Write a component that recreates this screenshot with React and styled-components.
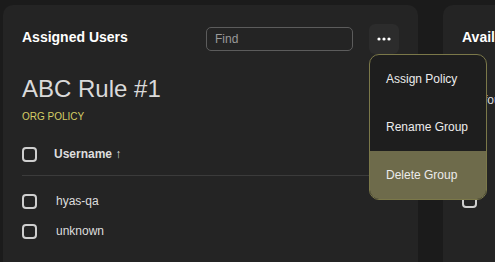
import React, { useState } from 'react';
import styled, { createGlobalStyle } from 'styled-components';

const GlobalStyle = createGlobalStyle`
  html, body {
    margin: 0;
    padding: 0;
    background: #1b1b1b;
    font-family: "Liberation Sans", Arial, sans-serif;
    overflow: hidden;
  }
`;

const Page = styled.div`
  display: flex;
  gap: 25px;
  padding: 5px 0 0 3px;
  height: 262px;
  box-sizing: border-box;
`;

const Panel = styled.section`
  position: relative;
  flex: ${p => (p.grow ? '1 0 auto' : '0 0 auto')};
  width: ${p => (p.width ? `${p.width}px` : 'auto')};
  height: 300px;
  background: #242424;
  border-radius: 10px;
  padding: 19px 19px 0 19px;
  box-sizing: border-box;
`;

const Header = styled.div`
  display: flex;
  align-items: center;
  height: 30px;
`;

const Title = styled.h2`
  margin: 0;
  padding-bottom: 4px;
  flex: 1;
  font-size: 14px;
  font-weight: 700;
  color: #ffffff;
  white-space: nowrap;
`;

const FindInput = styled.input`
  width: 147px;
  height: 24px;
  box-sizing: border-box;
  margin-right: 16px;
  padding: 0 8px;
  background: transparent;
  border: 1px solid #5c5c5c;
  border-radius: 5px;
  color: #ddd;
  font-family: inherit;
  font-size: 12px;
  outline: none;
  &::placeholder {
    color: #9a9a9a;
  }
`;

const MenuWrap = styled.div`
  position: relative;
`;

const DotsButton = styled.button`
  display: flex;
  align-items: center;
  justify-content: center;
  width: 30px;
  height: 30px;
  padding: 0;
  border: none;
  border-radius: 6px;
  background: #2c2c2c;
  cursor: pointer;
`;

const Menu = styled.div`
  position: absolute;
  top: 30px;
  left: 0;
  z-index: 5;
  width: 116px;
  background: #1e1e1e;
  border: 1px solid #7b7849;
  border-radius: 10px;
  overflow: hidden;
`;

const MenuItem = styled.div`
  display: flex;
  align-items: center;
  height: 48px;
  padding-left: 16px;
  font-size: 12px;
  color: #ececec;
  white-space: nowrap;
  background: ${p => (p.active ? '#6e6b4b' : 'transparent')};
`;

const RuleName = styled.h1`
  margin: 21px 0 0 0;
  font-size: 24px;
  line-height: 28px;
  font-weight: 400;
  color: #dadada;
`;

const Tag = styled.div`
  margin-top: 8px;
  font-size: 10px;
  line-height: 12px;
  color: #d5ce66;
`;

const Hint = styled.p`
  margin: 39px 0 0 0;
  font-size: 12px;
  color: #dcdcdc;
  white-space: nowrap;
`;

const List = styled.div`
  margin-top: ${p => p.top}px;
`;

const HeadRow = styled.div`
  display: flex;
  align-items: center;
  height: 30px;
  padding-bottom: 6px;
  border-bottom: 1px solid #3b3b3b;
  margin-bottom: 10px;
`;

const Row = styled.div`
  display: flex;
  align-items: center;
  height: 30px;
`;

const Check = styled.span`
  width: 15px;
  height: 15px;
  box-sizing: border-box;
  border: 2px solid #cfcfcf;
  border-radius: 4px;
  margin-right: ${p => p.gap}px;
  flex: none;
`;

const ColHead = styled.span`
  font-size: 12px;
  font-weight: 700;
  color: #dedede;
`;

const Cell = styled.span`
  font-size: 12px;
  color: #dedede;
`;

const users = ['hyas-qa', 'unknown'];

export default function App() {
  const [open] = useState(true);
  return (
    <>
      <GlobalStyle />
      <Page>
        <Panel width={415}>
          <Header>
            <Title>Assigned Users</Title>
            <FindInput placeholder="Find" />
            <MenuWrap>
              <DotsButton aria-label="More">
                <svg width="14" height="4" viewBox="0 0 14 4">
                  <circle cx="2" cy="2" r="1.6" fill="#fff" />
                  <circle cx="7" cy="2" r="1.6" fill="#fff" />
                  <circle cx="12" cy="2" r="1.6" fill="#fff" />
                </svg>
              </DotsButton>
              {open && (
                <Menu>
                  <MenuItem>Assign Policy</MenuItem>
                  <MenuItem>Rename Group</MenuItem>
                  <MenuItem active>Delete Group</MenuItem>
                </Menu>
              )}
            </MenuWrap>
          </Header>
          <RuleName>ABC Rule #1</RuleName>
          <Tag>ORG POLICY</Tag>
          <List top={16}>
            <HeadRow>
              <Check gap={17} />
              <ColHead>Username ↑</ColHead>
            </HeadRow>
            {users.map(u => (
              <Row key={u}>
                <Check gap={19} />
                <Cell>{u}</Cell>
              </Row>
            ))}
          </List>
        </Panel>
        <Panel grow>
          <Header>
            <Title>Available Users</Title>
          </Header>
          <Hint>Not found in group</Hint>
          <List top={78}>
            <Row>
              <Check gap={19} />
              <Cell>admin</Cell>
            </Row>
          </List>
        </Panel>
      </Page>
    </>
  );
}
